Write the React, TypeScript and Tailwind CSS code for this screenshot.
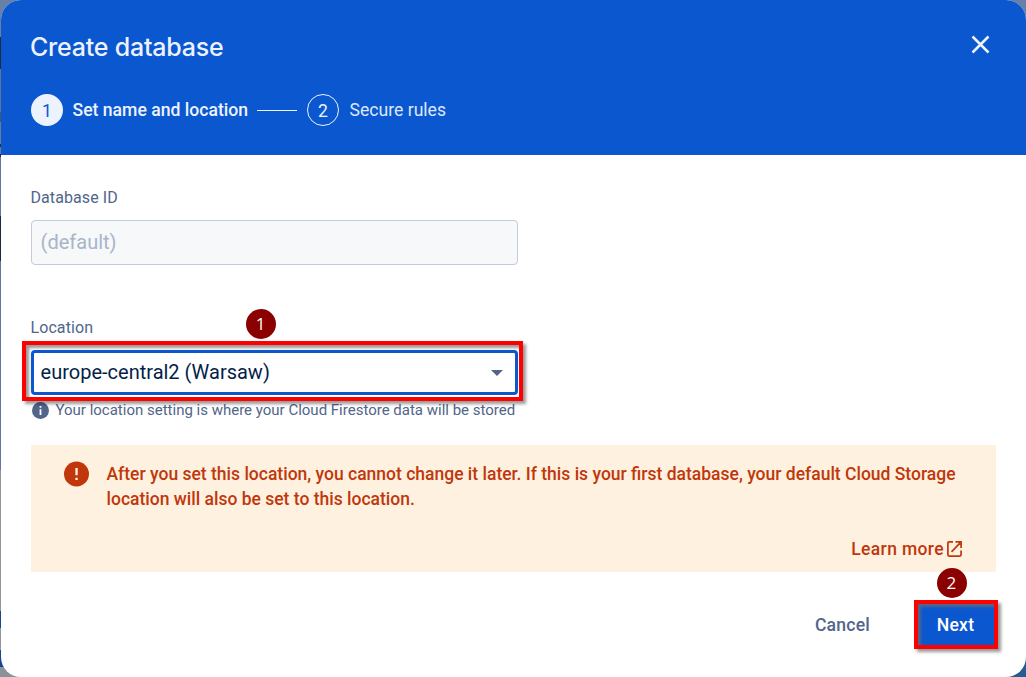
import { ReactNode } from "react";

const backdrop =
  "bg-[linear-gradient(to_bottom,#6880a8_0px,#6880a8_37px,#1c2940_37px,#1c2940_69px,#5f7599_69px,#5f7599_112px,#45566f_112px,#45566f_122px,#687b9c_122px,#687b9c_144px,#1c2940_144px,#1c2940_147px,#687b9c_147px,#687b9c_154px,#1c2940_154px,#1c2940_157px,#62779f_157px,#62779f_216px,#1c2940_216px,#1c2940_261px,#62779f_261px,#62779f_470px,#93969d_470px,#93969d_611px,#154594_611px,#154594_628px,#93969d_628px,#93969d_650px,#154594_650px,#154594_667px,#8b9299_667px)]";

function Marker({ children, className }: { children: ReactNode; className: string }) {
  return (
    <span
      className={`absolute flex size-[30px] items-center justify-center rounded-full bg-[#8b0000] pb-px font-['Open_Sans',sans-serif] text-[17px] font-normal leading-none text-white ${className}`}
    >
      {children}
    </span>
  );
}

function Highlight({ className }: { className: string }) {
  return (
    <span
      className={`pointer-events-none absolute border-4 border-[#ff0000] shadow-[3px_3px_3px_rgba(0,0,0,0.4),inset_3px_3px_3px_rgba(110,110,110,0.7)] ${className}`}
    />
  );
}

function Header() {
  return (
    <header className="flex h-[155px] flex-col bg-[#0b57d0] pl-[30px] pr-9 pt-[27px] text-[#ecf3fe]">
      <div className="flex h-10 items-center justify-between">
        <h2 className="-ml-px font-['Inter',sans-serif] text-[25px] font-medium leading-10 tracking-[-0.22px]">Create database</h2>
        <button aria-label="Close" className="-mt-[5px]">
          <svg width="19" height="19" viewBox="0 0 19 19" fill="none" stroke="currentColor" strokeWidth="2.5">
            <path d="M1.5 1.5l16 16M17.5 1.5l-16 16" />
          </svg>
        </button>
      </div>
      <div className="mt-[27px] flex h-8 items-center text-[17.6px]">
        <span className="flex size-8 items-center justify-center rounded-full bg-[#ecf3fe] pt-0.5 text-[#0b57d0]">1</span>
        <span className="ml-[9.5px] w-[174.5px] whitespace-nowrap font-medium">Set name and location</span>
        <span className="ml-[10px] h-px w-10 bg-[#ecf3fe]" />
        <span className="ml-[10px] flex size-8 items-center justify-center rounded-full border border-[#ecf3fe] pt-0.5">2</span>
        <span className="ml-[10.5px] whitespace-nowrap text-[#dce8fb]">Secure rules</span>
      </div>
    </header>
  );
}

export default function App() {
  return (
    <div className={`flex h-[677px] w-[1026px] overflow-hidden pl-px font-['Roboto',sans-serif] ${backdrop}`}>
      <div className="relative flex flex-1">
        <div className="absolute bottom-0 right-0 size-6 bg-[#265c91]" />
        <div className="relative flex flex-1 flex-col overflow-hidden rounded-[20px] bg-white">
          <Header />
          <main className="flex flex-1 flex-col px-[30px] pt-[33px] text-[#51658a]">
            <label className="-ml-[0.5px] h-5 text-[16px] leading-5 tracking-[0.08px]">Database ID</label>
            <div className="mt-3 flex h-[45px] w-[487px] items-center rounded-[4px] border border-[#c4cada] bg-[#f6f8fa] px-[8.6px] pb-0.5 text-[20px] text-[#a9b5c7]">
              (default)
            </div>
            <label className="-ml-[0.5px] mt-[53px] h-5 text-[16px] leading-5 tracking-[0.08px]">Location</label>
            <div className="relative mt-3 flex h-[45px] w-[487px] items-center justify-between rounded-[4px] border-[3px] border-[#0b57d0] pl-[6.6px] pr-3 text-[20px] text-[#041e49]">
              <span className="pb-0.5">europe-central2 (Warsaw)</span>
              <svg width="12" height="6" viewBox="0 0 12 6" fill="#51658a">
                <path d="M0 0h12L6 6z" />
              </svg>
              <Marker className="left-[211.5px] top-[-44px]">1</Marker>
              <Highlight className="left-[-12px] top-[-12px] h-[60px] w-[501px]" />
            </div>
            <div className="mt-[5px] flex h-5 items-center whitespace-nowrap text-[15px] leading-5">
              <svg className="ml-px mr-[6.5px]" width="17" height="17" viewBox="0 0 17 17">
                <circle cx="8.5" cy="8.5" r="8.5" fill="#51658a" />
                <path d="M7.6 3.9h1.8v1.8H7.6zM7.6 7.3h1.8v5.6H7.6z" fill="white" />
              </svg>
              Your location setting is where your Cloud Firestore data will be stored
            </div>
            <section className="mt-[25px] flex h-[127px] flex-col bg-[#fff1df] pl-[33px] pr-[33px] pt-[17px] text-[17.51px] font-medium leading-[25px] text-[#c0370c]">
              <div className="flex">
                <svg className="-mt-px mr-[17.5px] shrink-0" width="25" height="26" viewBox="0 0 25 26">
                  <circle cx="12.5" cy="13" r="12.5" fill="#c0370c" />
                  <path d="M11.4 7h2.3v7.2h-2.3zM11.4 16.7h2.3V19h-2.3z" fill="#fff1df" />
                </svg>
                <p className="whitespace-nowrap">
                  After you set this location, you cannot change it later. If this is your first database, your default Cloud Storage
                  <br />
                  location will also be set to this location.
                </p>
              </div>
              <a className="mr-px mt-[25px] flex items-center justify-end gap-[3px] tracking-[0.36px]">
                Learn more
                <svg className="-mt-0.5" width="15" height="16" viewBox="0 0 15 16" fill="none" stroke="currentColor" strokeWidth="1.7">
                  <path d="M6 .9H2.2Q.9.9.9 2.2v11.6q0 1.3 1.3 1.3h10.6q1.3 0 1.3-1.3V9.5M8.5.9h5.6v6M14.1.9L4.5 10.8" />
                </svg>
              </a>
            </section>
            <div className="mt-[30px] flex h-[45px] items-center justify-end text-[17.6px] font-medium">
              <button className="mr-[46px] pt-0.5 tracking-[0.2px]">Cancel</button>
              <button className="relative flex h-[44px] w-20 items-center justify-center rounded-[4px] bg-[#0b57d0] pr-px pt-0.5 text-white tracking-[0.2px]">
                Next
                <Marker className="left-[20.5px] top-[-34.5px]">2</Marker>
                <Highlight className="left-[-2px] top-[-3px] h-[49px] w-[84px]" />
              </button>
            </div>
          </main>
        </div>
      </div>
    </div>
  );
}
